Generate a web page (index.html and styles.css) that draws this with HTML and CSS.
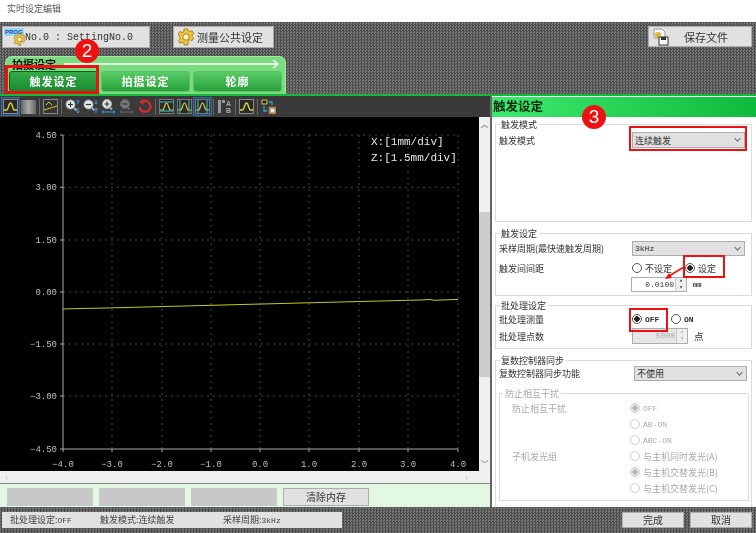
FILE: index.html
```html
<!DOCTYPE html>
<html lang="zh">
<head>
<meta charset="utf-8">
<title>实时设定编辑</title>
<link rel="stylesheet" href="styles.css">
</head>
<body>
<svg class="defs" width="0" height="0">
  <defs>
    <symbol id="gear" viewBox="0 0 20 20">
      <path d="M8 1h4l.6 2.400 1.800.8 2.200-1.200 2 3-1.900 1.600v2l1.900 1.600-2 3-2.200-1.200-1.800.8L12 19H8l-.6-2.400-1.800-.8-2.200 1.200-2-3 1.900-1.600v-2L1.400 6.800l2-3 2.200 1.200 1.800-.8z" fill="#efc23f" stroke="#a87a1c"/>
      <circle cx="10" cy="10" r="3.500" fill="#fff3c4" stroke="#a87a1c"/>
    </symbol>
    <symbol id="peak" viewBox="0 0 15 15">
      <rect x=".5" y=".5" width="14" height="14" fill="#2a2a2a" stroke="#8a8a8a"/>
      <path d="M1 11h2.500c2 0 2-7 4-7s2 7 4 7H14" fill="none" stroke="#e6d83a" stroke-width="1.300"/>
    </symbol>
    <symbol id="peakb" viewBox="0 0 15 15">
      <rect x=".5" y=".5" width="14" height="14" fill="#2a2a2a" stroke="#777"/>
      <path d="M1 11h2.500c2 0 2-7 4-7s2 7 4 7H14" fill="none" stroke="#d9c93a" stroke-width="1.200"/>
      <path d="M1 3h13M1 12h13" stroke="#39c6d8"/>
    </symbol>
    <symbol id="peakc" viewBox="0 0 15 15">
      <rect x=".5" y=".5" width="14" height="14" fill="#2a2a2a" stroke="#777"/>
      <path d="M1 11h2.500c2 0 2-7 4-7s2 7 4 7H14" fill="none" stroke="#d9c93a" stroke-width="1.200"/>
      <path d="M3 1v13M12 1v13" stroke="#39c6d8"/>
    </symbol>
    <symbol id="zoomin" viewBox="0 0 15 15">
      <circle cx="5.500" cy="5.500" r="4.500" fill="#dfe6ea" stroke="#aaa"/>
      <path d="M3 5.500h5M5.500 3v5" stroke="#333" stroke-width="1.200"/>
      <path d="M9 9l2.500 2.500" stroke="#aaa" stroke-width="2"/>
      <path d="M13 1v4M13 9v5M11.500 2.500L13 1l1.500 1.500M11.500 12.500L13 14l1.500-1.500" fill="none" stroke="#2f9fe8"/>
    </symbol>
    <symbol id="zoomout" viewBox="0 0 15 15">
      <circle cx="5.500" cy="5.500" r="4.500" fill="#dfe6ea" stroke="#aaa"/>
      <path d="M3 5.500h5" stroke="#333" stroke-width="1.200"/>
      <path d="M9 9l2.500 2.500" stroke="#aaa" stroke-width="2"/>
      <path d="M13 1v4M13 9v5M11.500 3.500L13 5l1.500-1.500M11.500 10.500L13 9l1.500 1.500" fill="none" stroke="#2f9fe8"/>
    </symbol>
    <symbol id="zoomh" viewBox="0 0 15 15">
      <circle cx="6" cy="5" r="4.500" fill="#dfe6ea" stroke="#aaa"/>
      <path d="M3.500 5h5M6 2.500v5" stroke="#333" stroke-width="1.200"/>
      <path d="M9 8.500l2 2" stroke="#aaa" stroke-width="2"/>
      <path d="M1 13h13M2.500 11.500L1 13l1.500 1.500M12.500 11.500L14 13l-1.500 1.500" fill="none" stroke="#2f9fe8"/>
    </symbol>
    <symbol id="zoomg" viewBox="0 0 15 15">
      <circle cx="6" cy="5" r="4.500" fill="#777" stroke="#666"/>
      <path d="M3.500 5h5" stroke="#333" stroke-width="1.200"/>
      <path d="M9 8.500l2 2" stroke="#666" stroke-width="2"/>
      <path d="M1 13h13M2.500 11.500L1 13l1.500 1.500M12.500 11.500L14 13l-1.500 1.500" fill="none" stroke="#666"/>
    </symbol>
  </defs>
</svg>

<div class="app">
  <div class="titlebar">实时设定编辑</div>

  <header class="topband">
    <div class="toprow">
      <div class="btn btn-setting">
        <span class="prog">
          <span class="prog-tag">PROG</span>
          <svg class="prog-gear"><use href="#gear"/></svg>
        </span>
        <span class="mono">No.0 : SettingNo.0</span>
      </div>
      <div class="btn btn-common">
        <svg class="ic18"><use href="#gear"/></svg>
        <span>测量公共设定</span>
      </div>
      <div class="btn btn-save">
        <svg class="ic18" viewBox="0 0 18 18">
          <path d="M3 1h8l3 3v6H3z" fill="#f4f4f4" stroke="#999"/>
          <circle cx="7" cy="7" r="3" fill="#e0b93a"/>
          <rect x="8" y="9" width="9" height="8" fill="#fff" stroke="#333"/>
          <rect x="10" y="9" width="5" height="3" fill="#333"/>
        </svg>
        <span class="save-label">保存文件</span>
      </div>
    </div>
    <div class="tabpanel">
      <div class="tabtitle">
        <span class="tabtitle-text">拍摄设定</span>
        <svg class="tabarrow" viewBox="0 0 218 10" preserveAspectRatio="none">
          <path d="M0 5h216M211 1l5 4-5 4" fill="none" stroke="#fff" stroke-width="1.300"/>
        </svg>
      </div>
      <div class="tabs">
        <div class="tab tab-on">触发设定</div>
        <div class="tab">拍摄设定</div>
        <div class="tab">轮廓</div>
      </div>
    </div>
  </header>

  <div class="greenline"></div>

  <main class="body">
    <section class="left">
      <div class="toolbar">
        <span class="tool tool-on"><svg class="ic15"><use href="#peak"/></svg></span>
        <span class="tool"><span class="graybar"></span></span>
        <span class="sep"></span>
        <span class="tool">
          <svg class="ic15" viewBox="0 0 15 15">
            <rect x=".5" y=".5" width="14" height="14" fill="#333" stroke="#888"/>
            <path d="M1 11l13-4" stroke="#d9c93a"/>
            <path d="M3 6l3-3 3 3" fill="none" stroke="#d9c93a"/>
          </svg>
        </span>
        <span class="sep"></span>
        <span class="tool"><svg class="ic15"><use href="#zoomin"/></svg></span>
        <span class="tool"><svg class="ic15"><use href="#zoomout"/></svg></span>
        <span class="tool"><svg class="ic15"><use href="#zoomh"/></svg></span>
        <span class="tool"><svg class="ic15"><use href="#zoomg"/></svg></span>
        <span class="tool">
          <svg class="ic15" viewBox="0 0 15 15">
            <path d="M4 3.500A5.500 5.500 0 1 1 2.500 8" fill="none" stroke="#d92a2a" stroke-width="2.200"/>
            <path d="M6.500 0v6L2 3z" fill="#d92a2a"/>
          </svg>
        </span>
        <span class="sep"></span>
        <span class="tool"><svg class="ic15"><use href="#peakb"/></svg></span>
        <span class="tool"><svg class="ic15"><use href="#peakc"/></svg></span>
        <span class="tool tool-on"><svg class="ic15"><use href="#peakc"/></svg></span>
        <span class="sep"></span>
        <span class="tool ab">
          <svg class="ic15" viewBox="0 0 15 15">
            <rect x="1" y="1" width="3" height="13" fill="#999"/>
            <rect x="5" y="1" width="3" height="3" fill="#999"/>
            <text class="ab-text" x="9" y="7">A</text>
            <text class="ab-text" x="9" y="14">B</text>
          </svg>
        </span>
        <span class="sep"></span>
        <span class="tool"><svg class="ic15"><use href="#peak"/></svg></span>
        <span class="sep"></span>
        <span class="tool">
          <svg class="ic15" viewBox="0 0 15 15">
            <path d="M1 1h5v4H1z" fill="#222" stroke="#d9c93a"/>
            <path d="M3 7v5h3M11 6V3H8" fill="none" stroke="#2f9fe8" stroke-width="1.300"/>
            <rect x="8" y="8" width="7" height="7" fill="#c9a27a" stroke="#8b6a46"/>
            <rect x="10" y="10" width="3" height="3" fill="#eee"/>
          </svg>
        </span>
      </div>

      <div class="chartrow">
        <div class="chart">
          <svg class="plot" viewBox="0 0 479 354" width="479" height="354">
            <g class="grid">
              <path d="M63 18H458M63 70.300H458M63 123H458M63 175H458M63 227H458M63 279H458"/>
              <path d="M112 18V332M162 18V332M211 18V332M260 18V332M309 18V332M359 18V332M408 18V332M458 18V332"/>
            </g>
            <g class="axis">
              <path d="M63 18V332H458"/>
              <path d="M60 18h3M60 70.300h3M60 123h3M60 175h3M60 227h3M60 279h3M60 332h3"/>
              <path d="M63 332v3M112 332v3M162 332v3M211 332v3M260 332v3M309 332v3M359 332v3M408 332v3M458 332v3"/>
            </g>
            <path class="trace" d="M63 192L77 191.600L106 191L200 188.600L300 186L420 183L430 182.500L434 183.300L458 182.400"/>
            <g class="ylabels">
              <text x="57" y="21">4.50</text>
              <text x="57" y="73">3.00</text>
              <text x="57" y="126">1.50</text>
              <text x="57" y="178">0.00</text>
              <text x="57" y="230">−1.50</text>
              <text x="57" y="282">−3.00</text>
              <text x="57" y="335">−4.50</text>
            </g>
            <g class="xlabels">
              <text x="63" y="350">−4.0</text>
              <text x="112" y="350">−3.0</text>
              <text x="162" y="350">−2.0</text>
              <text x="211" y="350">−1.0</text>
              <text x="260" y="350">0.0</text>
              <text x="309" y="350">1.0</text>
              <text x="359" y="350">2.0</text>
              <text x="408" y="350">3.0</text>
              <text x="458" y="350">4.0</text>
            </g>
            <g class="scale">
              <text x="371" y="28">X:[1mm/div]</text>
              <text x="371" y="44">Z:[1.5mm/div]</text>
            </g>
          </svg>
        </div>
        <div class="vscroll">
          <span class="chev">︿</span>
          <div class="vthumb"></div>
          <span class="chev chev-down">﹀</span>
        </div>
      </div>

      <div class="hscroll">
        <span class="harrow">‹</span>
        <span class="harrow">›</span>
      </div>

      <div class="memorybar">
        <span class="membtn"></span>
        <span class="membtn"></span>
        <span class="membtn"></span>
        <span class="membtn membtn-on">清除内存</span>
      </div>
    </section>

    <aside class="right">
      <h2 class="panelhead">触发设定</h2>
      <div class="panelbody">
        <div class="group g1">
          <span class="legend">触发模式</span>
          <div class="row row-16">
            <span class="lab">触发模式</span>
            <span class="select">连续触发<i class="caret"></i></span>
          </div>
        </div>

        <div class="group g2">
          <span class="legend">触发设定</span>
          <div class="row row-15">
            <span class="lab">采样周期(最快速触发周期)</span>
            <span class="select select-mono">3kHz<i class="caret"></i></span>
          </div>
          <div class="row row-16 mt4">
            <span class="lab">触发间间距</span>
            <span class="radio-w w53"><i class="radio"></i>不设定</span>
            <span class="radio-w"><i class="radio on"></i>设定</span>
          </div>
          <div class="row row-15 mt1">
            <span class="lab lab-spin"></span>
            <span class="spin"><span class="spin-val">0.0100</span><i class="spin-btns"><b>▴</b><b>▾</b></i></span>
            <span class="unit-mm mono-s">mm</span>
          </div>
        </div>

        <div class="group g3">
          <span class="legend legend-tight">批处理设定</span>
          <div class="row row-16">
            <span class="lab">批处理测量</span>
            <span class="radio-w w39 mono-s"><i class="radio on"></i>OFF</span>
            <span class="radio-w mono-s"><i class="radio"></i>ON</span>
          </div>
          <div class="row row-16 mt1">
            <span class="lab">批处理点数</span>
            <span class="spin spin-off"><span class="spin-val">5000</span><i class="spin-btns"><b>▴</b><b>▾</b></i></span>
            <span class="unit">点</span>
          </div>
        </div>

        <div class="group g4">
          <span class="legend legend-tight">复数控制器同步</span>
          <div class="row row-15">
            <span class="lab lab-135">复数控制器同步功能</span>
            <span class="select">不使用<i class="caret"></i></span>
          </div>
          <div class="inner">
            <span class="legend legend-off">防止相互干扰</span>
            <div class="irow"><span class="ilab">防止相互干扰</span><span class="radio-w mono-s"><i class="radio off-on"></i>OFF</span></div>
            <div class="irow"><span class="ilab"></span><span class="radio-w mono-s"><i class="radio off"></i>AB-ON</span></div>
            <div class="irow"><span class="ilab"></span><span class="radio-w mono-s"><i class="radio off"></i>ABC-ON</span></div>
            <div class="irow"><span class="ilab">子机发光组</span><span class="radio-w"><i class="radio off"></i>与主机同时发光(A)</span></div>
            <div class="irow"><span class="ilab"></span><span class="radio-w"><i class="radio off-on"></i>与主机交替发光(B)</span></div>
            <div class="irow"><span class="ilab"></span><span class="radio-w"><i class="radio off"></i>与主机交替发光(C)</span></div>
          </div>
        </div>
      </div>
    </aside>
  </main>

  <footer class="statusbar">
    <div class="status">
      <span class="st1">批处理设定:<span class="mono-t">OFF</span></span>
      <span class="st2">触发模式:连续触发</span>
      <span>采样周期:<span class="mono-t">3kHz</span></span>
    </div>
    <div class="actions">
      <span class="act">完成</span>
      <span class="act">取消</span>
    </div>
  </footer>

  <span class="mark mark-tab"></span>
  <span class="mark mark-mode"></span>
  <span class="mark mark-set"></span>
  <span class="mark mark-off"></span>
  <span class="badge badge-2">2</span>
  <span class="badge badge-3">3</span>
  <svg class="callout" viewBox="0 0 20 14"><path d="M19 1L4 10" stroke="#ee1111" stroke-width="1.500"/><path d="M0 13l7-1-3-5z" fill="#ee1111"/></svg>
</div>
</body>
</html>
```

FILE: styles.css
```css
* { box-sizing: border-box; }
html, body { margin: 0; padding: 0; }
body {
  width: 756px;
  height: 533px;
  overflow: hidden;
  font-family: "Noto Sans CJK SC", "Liberation Sans", sans-serif;
  font-size: 10px;
  color: #333;
  background: #fff;
}
.defs { position: absolute; }
.app {
  position: relative;
  width: 756px;
  height: 533px;
  display: flex;
  flex-direction: column;
  filter: blur(.35px);
}
.titlebar {
  height: 22px;
  flex: none;
  padding: 2px 0 0 7px;
  font-size: 9px;
  line-height: 14px;
  color: #555;
  background: #fff;
}
.topband, .statusbar {
  background: repeating-conic-gradient(#4c4c4c 0 25%, #777 0 50%) 0 0 / 3px 3px;
}
.topband {
  height: 72px;
  flex: none;
  padding: 4px 4px 0 2px;
  display: flex;
  flex-direction: column;
}
.toprow { display: flex; height: 22px; align-items: stretch; }
.btn {
  display: flex;
  align-items: center;
  background: #e1e1e1;
  border: 1px solid #adadad;
  font-size: 11px;
}
.btn-setting { width: 148px; }
.btn-common { width: 101px; margin-left: 23px; padding-left: 3px; gap: 2px; }
.btn-save { width: 104px; margin-left: auto; padding-left: 2px; height: 21px; }
.save-label { margin-left: 15px; }
.mono { font-family: "Liberation Mono", monospace; font-size: 10px; }
.mono-s { font-family: "Liberation Mono", monospace; font-size: 8px; font-weight: 700; }
.mono-t { font-family: "Liberation Mono", monospace; font-size: 8px; }
.prog { position: relative; width: 22px; height: 20px; flex: none; }
.prog-tag {
  position: absolute;
  left: 1px;
  top: 1px;
  padding: 0 1px;
  font: 700 6px/8px "Liberation Sans", sans-serif;
  color: #1650b0;
  background: #9fd4f5;
}
.prog-gear { position: absolute; left: 10px; top: 6px; width: 13px; height: 13px; }
.ic18 { width: 18px; height: 18px; flex: none; }

.tabpanel {
  margin: 8px 0 0 3px;
  width: 281px;
  height: 38px;
  background: #7adb7f;
  border: 1px solid #a6e8a8;
  border-bottom: 0;
  border-radius: 7px 7px 0 0;
  padding: 0 3px;
  overflow: hidden;
}
.tabtitle { display: flex; align-items: center; height: 14px; padding-left: 3px; }
.tabtitle-text { font-size: 11px; font-weight: 700; color: #111; line-height: 14px; flex: none; }
.tabarrow { width: 216px; height: 10px; margin-left: 8px; flex: none; }
.tabs { display: flex; gap: 3px; }
.tab {
  width: 89px;
  height: 21px;
  border: 1px solid #5cc268;
  border-radius: 3px;
  background: linear-gradient(#58cc66, #2aa03c);
  color: #fff;
  font-size: 11px;
  font-weight: 700;
  line-height: 18px;
  text-align: center;
  letter-spacing: 1px;
}
.tab-on { background: linear-gradient(#35ac49, #1a8a30); border-color: #0d5c1c; }

.greenline { height: 2px; flex: none; background: #14b93a; }

.body { flex: 1; display: flex; min-height: 0; background: #666; }
.left { width: 490px; flex: none; display: flex; flex-direction: column; }
.toolbar {
  height: 21px;
  flex: none;
  background: #3a3a3a;
  display: flex;
  align-items: center;
  padding-left: 2px;
  gap: 1px;
}
.tool {
  width: 17px;
  height: 17px;
  display: flex;
  align-items: center;
  justify-content: center;
  flex: none;
}
.tool-on { background: #2b4a6a; outline: 1px solid #3a6a9a; }
.ic15 { width: 15px; height: 15px; display: block; }
.graybar {
  width: 15px;
  height: 14px;
  background: linear-gradient(90deg, #666, #aaa 50%, #666);
}
.sep { width: 1px; height: 16px; background: #666; margin: 0 1px; flex: none; }
.ab-text { font: 700 7px "Liberation Sans", sans-serif; fill: #aaa; }

.chartrow { height: 354px; flex: none; display: flex; }
.chart { width: 479px; flex: none; background: #000; }
.plot { display: block; }
.grid path { fill: none; stroke: #484848; stroke-width: 1; stroke-dasharray: 2 4; }
.axis path { fill: none; stroke: #aaa; stroke-width: 1; }
.trace { fill: none; stroke: #c9c81e; stroke-width: 1; }
.ylabels text, .xlabels text {
  font-family: "Liberation Mono", monospace;
  font-size: 9px;
  fill: #bdbdbd;
}
.ylabels text { text-anchor: end; }
.xlabels text { text-anchor: middle; }
.scale text {
  font-family: "Liberation Mono", monospace;
  font-size: 11px;
  fill: #e8e8e8;
}
.vscroll {
  width: 11px;
  flex: none;
  background: #f0f0f0;
  position: relative;
  display: flex;
  flex-direction: column;
  align-items: center;
}
.chev { font-size: 8px; line-height: 14px; height: 14px; color: #555; }
.vthumb { width: 100%; height: 165px; margin-top: 81px; background: #cdcdcd; }
.chev-down { margin-top: auto; }
.hscroll {
  height: 13px;
  flex: none;
  background: #f0f0f0;
  display: flex;
  justify-content: space-between;
  padding: 0 22px 0 5px;
  font-size: 11px;
  line-height: 11px;
  color: #bbb;
  border-bottom: 1px solid #888;
}
.memorybar {
  height: 23px;
  flex: none;
  background: #e3f8e3;
  display: flex;
  gap: 6px;
  padding: 4px 0 1px 7px;
}
.membtn { width: 86px; background: #c8c8c8; }
.membtn-on {
  background: #e1e1e1;
  border: 1px solid #adadad;
  text-align: center;
  line-height: 16px;
  font-size: 10px;
}

.right {
  width: 264px;
  margin-left: 2px;
  flex: none;
  background: #fff;
  display: flex;
  flex-direction: column;
  padding-top: 1px;
}
.panelhead {
  margin: 0;
  height: 20px;
  flex: none;
  padding-left: 1px;
  font-size: 12.500px;
  line-height: 18px;
  font-weight: 700;
  color: #0a2a12;
  background: linear-gradient(90deg, #3fe96f, #0dbb3d);
}
.panelbody { flex: 1; padding: 7px 4px 0 3px; display: flex; flex-direction: column; }
.group {
  border: 1px solid #dcdcdc;
  padding: 0 0 0 3px;
  flex: none;
}
.g1 { height: 98px; }
.g2 { height: 63px; margin-top: 11px; }
.g3 { height: 44px; margin-top: 9px; }
.g4 { height: 148px; margin-top: 11px; border-bottom: 0; }
.legend {
  display: block;
  width: fit-content;
  height: 14px;
  margin: -7px 0 0 1px;
  padding: 0 2px 0 1px;
  background: #fff;
  font-size: 9px;
  line-height: 14px;
}
.legend-tight { margin-bottom: -2px; }
.legend-off { color: #aaa; margin-left: 3px; margin-bottom: -1px; padding: 0 2px; }
.row { display: flex; align-items: center; font-size: 9px; }
.row-16 { height: 16px; }
.row-15 { height: 15px; }
.mt1 { margin-top: 1px; }
.mt4 { margin-top: 4px; }
.lab { width: 133px; flex: none; white-space: nowrap; }
.lab-spin { width: 132px; }
.lab-135 { width: 135px; }
.select {
  width: 113px;
  height: 15px;
  flex: none;
  display: flex;
  align-items: center;
  padding-left: 2px;
  background: #e1e1e1;
  border: 1px solid #adadad;
  position: relative;
}
.select-mono { font-family: "Liberation Mono", monospace; font-size: 8px; }
.g1 .select { height: 16px; }
.caret {
  position: absolute;
  right: 4px;
  top: 3px;
  width: 5px;
  height: 5px;
  border-right: 1px solid #666;
  border-bottom: 1px solid #666;
  transform: rotate(45deg) scale(.9);
}
.radio-w { display: inline-flex; align-items: center; gap: 3px; white-space: nowrap; }
.w53 { width: 53px; }
.w39 { width: 39px; }
.radio {
  width: 10px;
  height: 10px;
  flex: none;
  border: 1px solid #555;
  border-radius: 50%;
  background: #fff;
}
.radio.on { background: radial-gradient(circle, #222 0 2.500px, #fff 3px); }
.radio.off { border-color: #ccc; }
.radio.off-on { border-color: #ccc; background: radial-gradient(circle, #bbb 0 2.500px, #f0f0f0 3px); }
.spin {
  width: 56px;
  height: 15px;
  flex: none;
  margin-right: 6px;
  border: 1px solid #adadad;
  background: #fff;
  display: flex;
  font-family: "Liberation Mono", monospace;
  font-size: 8px;
}
.spin-val { flex: 1; text-align: right; padding-right: 1px; line-height: 13px; }
.spin-btns {
  width: 11px;
  display: flex;
  flex-direction: column;
  background: #eee;
  border-left: 1px solid #ccc;
  font-style: normal;
}
.spin-btns b { flex: 1; font-size: 6px; line-height: 6px; text-align: center; font-weight: 400; }
.spin-off { background: #e6e6e6; color: #aaa; margin-right: 6px; height: 16px; }
.unit { font-size: 9.500px; }
.unit-mm { font-size: 7px; }
.inner {
  margin-top: 12px;
  width: 250px;
  height: 108px;
  border: 1px solid #dcdcdc;
  color: #aaa;
}
.irow { display: flex; align-items: center; height: 16px; font-size: 9px; }
.ilab { width: 130px; padding-left: 12px; flex: none; font-size: 9px; }
.inner .mono-s { font-weight: 400; }

.statusbar {
  height: 26px;
  flex: none;
  display: flex;
  justify-content: space-between;
  align-items: flex-start;
  padding: 5px 4px 0 2px;
}
.status {
  width: 340px;
  height: 16px;
  display: flex;
  background: #e1e1e1;
  padding-left: 8px;
  font-size: 9px;
  line-height: 16px;
  color: #444;
}
.st1 { width: 90px; }
.st2 { width: 123px; }
.actions { display: flex; gap: 6px; }
.act {
  width: 62px;
  height: 16px;
  background: #e1e1e1;
  border: 1px solid #adadad;
  text-align: center;
  font-size: 10px;
  line-height: 14px;
}

/* annotations painted over the screenshot */
.mark { position: absolute; border: 2px solid #ee1111; }
.mark-tab { left: 5px; top: 65px; width: 94px; height: 29px; border-width: 3px; }
.mark-mode { left: 629px; top: 126px; width: 118px; height: 25px; }
.mark-set { left: 683px; top: 255px; width: 42px; height: 23px; }
.mark-off { left: 629px; top: 308px; width: 39px; height: 24px; }
.badge {
  position: absolute;
  width: 24px;
  height: 24px;
  border-radius: 50%;
  background: #ee1111;
  color: #fff;
  font: 400 19px/24px "Liberation Sans", sans-serif;
  text-align: center;
}
.badge-2 { left: 75px; top: 39px; }
.badge-3 { left: 582px; top: 105px; }
.callout { position: absolute; left: 665px; top: 266px; width: 20px; height: 14px; }
```
